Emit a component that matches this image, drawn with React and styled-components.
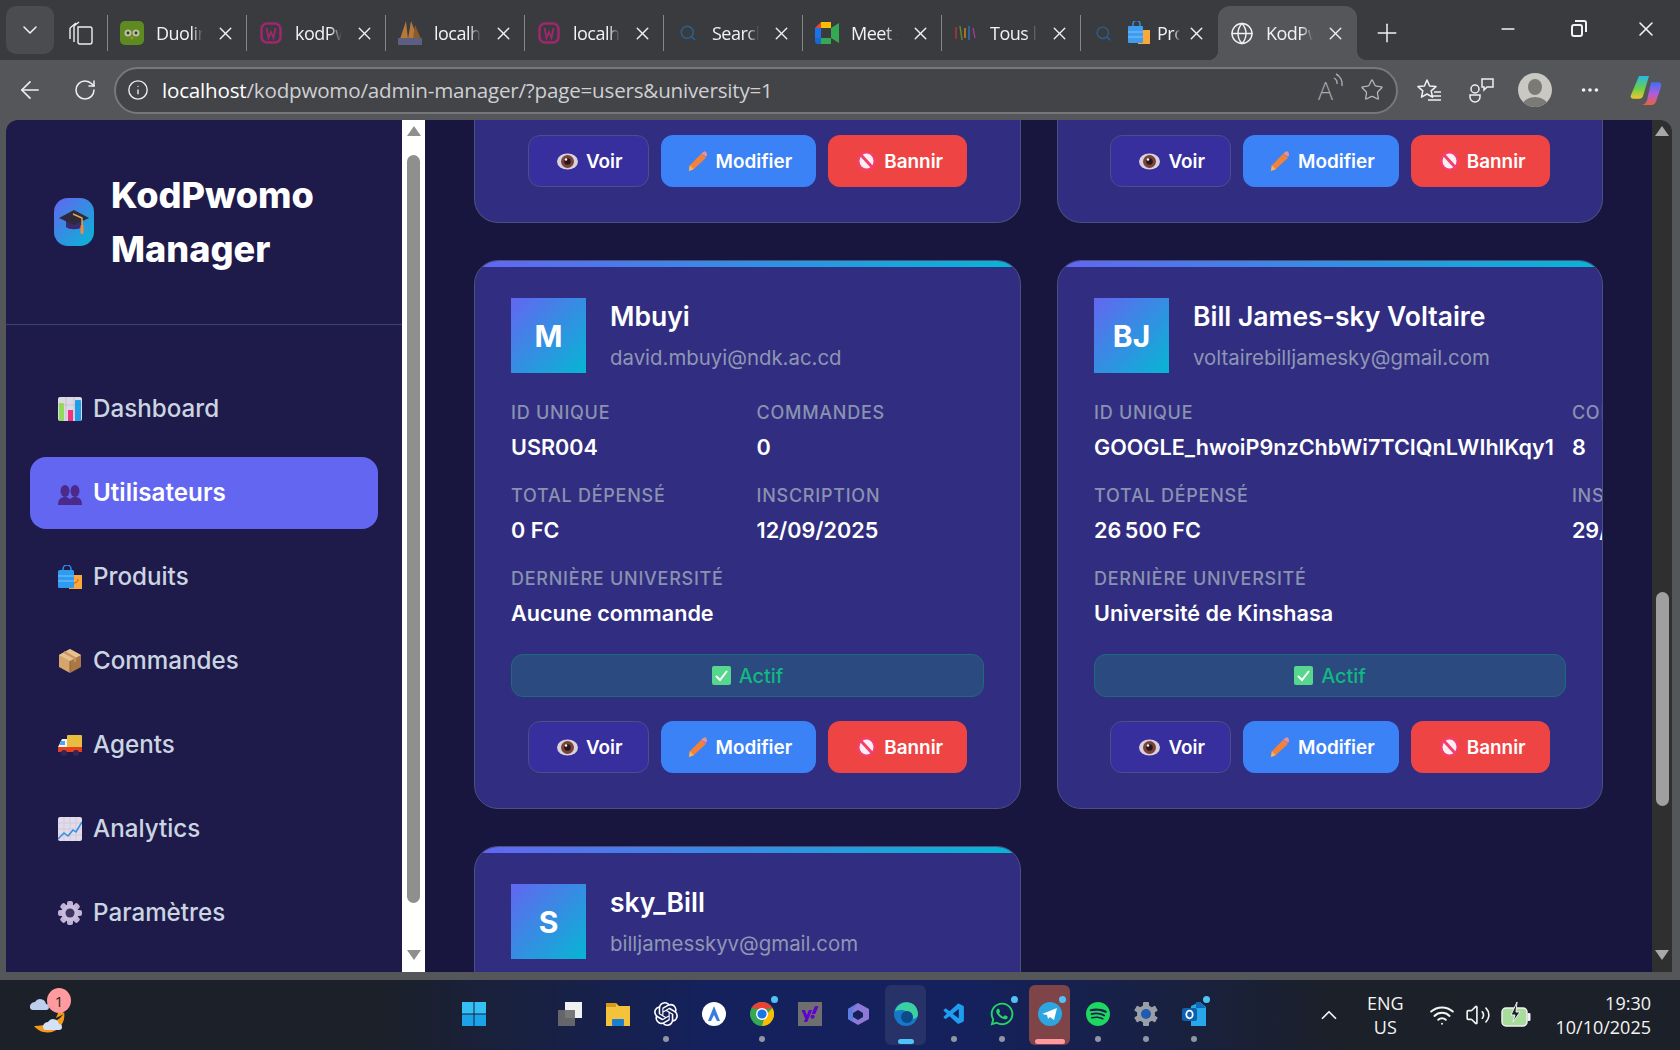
import styled, { createGlobalStyle, css } from 'styled-components'
import { ArrowLeft, RotateCw, Info, Star, Minus, X, Plus, ChevronDown, ChevronUp, Globe, Search, Wifi, Volume2, Ellipsis } from 'lucide-react'
import { SiOpenai, SiSpotify } from 'react-icons/si'
import { FaWhatsapp, FaYahoo } from 'react-icons/fa'
import { VscVscode } from 'react-icons/vsc'

const GlobalStyle = createGlobalStyle`
  html, body { margin: 0; padding: 0; background: #55565a; }
  * { box-sizing: border-box; }
`

const Screen = styled.div`
  width: 1680px;
  height: 1050px;
  display: flex;
  flex-direction: column;
  overflow: hidden;
  background: #55565a;
  font-family: Inter, "Liberation Sans", sans-serif;
`

/* ---- browser chrome ---- */
const TabStrip = styled.div`
  height: 60px;
  flex: none;
  display: flex;
  align-items: flex-end;
  padding-left: 6px;
  background: #3a3b3f;
  color: #f2f2f2;
  font-family: "Open Sans", "Liberation Sans", sans-serif;
`
const Collapse = styled.div`
  width: 48px;
  height: 48px;
  margin-bottom: 6px;
  display: flex;
  align-items: center;
  justify-content: center;
  background: #4b4c50;
  border-radius: 10px;
`
const Workspaces = styled.div`
  width: 54px;
  height: 54px;
  display: flex;
  align-items: center;
  justify-content: center;
  position: relative;
  &::after {
    content: '';
    position: absolute;
    right: 0;
    top: 9px;
    height: 36px;
    width: 1px;
    background: #85868a;
  }
`
const Tab = styled.div`
  width: ${p => p.$w || 139}px;
  height: 54px;
  display: flex;
  align-items: center;
  gap: ${p => p.$gap ?? 12}px;
  padding: 0 11px 0 12px;
  position: relative;
  ${p => p.$sep && css`
    &::after {
      content: '';
      position: absolute;
      right: 0;
      top: 9px;
      height: 36px;
      width: 1px;
      background: #85868a;
    }
  `}
  ${p => p.$active && css`
    background: #55565a;
    border-radius: 12px 12px 0 0;
    &::before, &::after {
      content: '';
      position: absolute;
      bottom: 0;
      width: 10px;
      height: 10px;
    }
    &::before {
      left: -10px;
      background: radial-gradient(circle at 0 0, transparent 10px, #55565a 10.5px);
    }
    &::after {
      right: -10px;
      background: radial-gradient(circle at 100% 0, transparent 10px, #55565a 10.5px);
    }
  `}
`
const TabIcon = styled.span`
  width: ${p => p.$w || 24}px;
  height: 24px;
  margin-left: ${p => p.$ml || 0}px;
  flex: none;
  display: flex;
  align-items: center;
  justify-content: center;
`
const TabTitle = styled.span`
  flex: 1;
  min-width: 0;
  font-size: 18px;
  letter-spacing: -0.5px;
  white-space: nowrap;
  overflow: hidden;
  -webkit-mask-image: linear-gradient(90deg, #000 75%, transparent 100%);
  mask-image: linear-gradient(90deg, #000 75%, transparent 100%);
`
const NewTab = styled.div`
  width: 60px;
  height: 54px;
  display: flex;
  align-items: center;
  justify-content: center;
`
const WindowControls = styled.div`
  margin-left: auto;
  display: flex;
  height: 60px;
`
const WindowBtn = styled.div`
  width: 69px;
  display: flex;
  align-items: center;
  justify-content: center;
  padding-bottom: 2px;
`
const RestoreIcon = styled.span`
  width: 12px;
  height: 13px;
  margin-top: 3px;
  border: 2px solid #f2f2f2;
  border-radius: 3px;
  position: relative;
  &::after {
    content: '';
    position: absolute;
    top: -6px;
    right: -6px;
    width: 10px;
    height: 10px;
    border-top: 2px solid #f2f2f2;
    border-right: 2px solid #f2f2f2;
    border-radius: 0 3px 0 0;
  }
`
const Toolbar = styled.div`
  height: 60px;
  flex: none;
  display: flex;
  align-items: center;
  background: #55565a;
  color: #f0f0f0;
`
const NavBtn = styled.div`
  width: ${p => p.$w || 48}px;
  height: 48px;
  margin-left: ${p => p.$ml || 0}px;
  flex: none;
  display: flex;
  align-items: center;
  justify-content: center;
`
const AddressBar = styled.div`
  width: 1284px;
  height: 47px;
  margin: 0 9px 0 4px;
  flex: none;
  display: flex;
  align-items: center;
  padding: 0 12px 0 11px;
  background: #434448;
  border: 2px solid #77787c;
  border-radius: 24px;
  font-family: "Open Sans", "Liberation Sans", sans-serif;
`
const Url = styled.div`
  margin-left: 13px;
  font-size: 20.6px;
  letter-spacing: -0.2px;
  color: #cfd0d3;
  white-space: nowrap;
  flex: 1;
  b { font-weight: 400; color: #fff; }
`
const ReadAloud = styled.span`
  width: 42px;
  display: flex;
  align-items: flex-start;
  font-size: 25px;
  font-weight: 300;
  color: #a9aaad;
`
const Avatar = styled.div`
  width: 34px;
  height: 34px;
  margin: 0 18px 0 6px;
  border-radius: 50%;
  flex: none;
  overflow: hidden;
`

/* ---- page ---- */
const Viewport = styled.div`
  height: 852px;
  flex: none;
  display: flex;
  margin: 0 8px 0 6px;
  border-radius: 12px 12px 0 0;
  overflow: hidden;
`
const Sidebar = styled.aside`
  width: 396px;
  flex: none;
  background: #1e1b4b;
`
const Brand = styled.div`
  height: 205px;
  display: flex;
  align-items: center;
  gap: 17px;
  padding: 0 0 0 48px;
  border-bottom: 1px solid #3b4668;
`
const BrandIcon = styled.div`
  width: 40px;
  height: 48px;
  border-radius: 14px;
  background: linear-gradient(135deg, #6366f1, #06b6d4);
  display: flex;
  align-items: center;
  justify-content: center;
`
const BrandName = styled.div`
  font-size: 36.1px;
  line-height: 54px;
  font-weight: 800;
  color: #fff;
`
const Nav = styled.nav`
  display: flex;
  flex-direction: column;
  gap: 12px;
  padding: 48px 24px 0;
`
const NavItem = styled.div`
  height: 72px;
  display: flex;
  align-items: center;
  gap: 11px;
  padding-left: 28px;
  padding-bottom: 1px;
  border-radius: 16px;
  font-size: 24.2px;
  font-weight: ${p => (p.$active ? 600 : 500)};
  color: ${p => (p.$active ? '#fff' : '#cbd5e1')};
  background: ${p => (p.$active ? '#6366f1' : 'transparent')};
`
const ScrollTrack = styled.div`
  width: ${p => p.$w}px;
  flex: none;
  background: ${p => p.$bg};
  display: flex;
  flex-direction: column;
  align-items: center;
  padding-top: 6px;
`
const ArrowGlyph = styled.div`
  width: 0;
  height: 0;
  border-left: 7px solid transparent;
  border-right: 7px solid transparent;
  border-bottom: ${p => (p.$down ? '0' : `10px solid ${p.$c}`)};
  border-top: ${p => (p.$down ? `10px solid ${p.$c}` : '0')};
  margin-top: ${p => p.$mt || 0}px;
`
const Thumb = styled.div`
  width: 13px;
  height: ${p => p.$h}px;
  margin-top: ${p => p.$mt}px;
  background: ${p => p.$c};
  border-radius: 7px;
`
const Main = styled.main`
  flex: 1;
  min-width: 0;
  overflow: hidden;
  background: #18163f;
  padding: 0 49px;
`
const CardGrid = styled.div`
  display: grid;
  grid-template-columns: 547px 546px;
  gap: 37px 36px;
  align-items: start;
`
const Card = styled.article`
  background: #312e81;
  border: 1px solid #4a5080;
  border-top: ${p => (p.$cut ? 'none' : '1px solid #4a5080')};
  border-radius: ${p => (p.$cut ? '0 0 24px 24px' : '24px')};
  padding: ${p => (p.$cut ? '15px 36px 35px' : '37px 36px 35px')};
  position: relative;
  overflow: hidden;
  &::before {
    content: '';
    display: ${p => (p.$cut ? 'none' : 'block')};
    position: absolute;
    top: 0;
    left: 0;
    right: 0;
    height: 6px;
    background: linear-gradient(90deg, #6366f1, #06b6d4);
  }
`
const CardHead = styled.header`
  display: flex;
  gap: 24px;
  margin-bottom: 27px;
`
const UserBadge = styled.div`
  width: 75px;
  height: 75px;
  flex: none;
  display: flex;
  align-items: center;
  justify-content: center;
  background: linear-gradient(135deg, #6366f1, #06b6d4);
  color: #fff;
  font-size: 30px;
  font-weight: 700;
`
const UserName = styled.div`
  font-size: 26.5px;
  line-height: 36px;
  font-weight: 600;
  color: #fff;
  margin-bottom: 8px;
`
const UserMail = styled.div`
  font-size: 20.4px;
  line-height: 32px;
  color: #8f96b3;
`
const Facts = styled.div`
  display: grid;
  grid-template-columns: 1fr 1fr;
  column-gap: 18px;
  row-gap: 22px;
`
const Fact = styled.div`
  grid-column: ${p => (p.$wide ? '1 / -1' : 'auto')};
`
const FactLabel = styled.div`
  font-size: 18px;
  line-height: 24px;
  font-weight: 500;
  letter-spacing: 0.75px;
  text-transform: uppercase;
  color: #8a92b0;
  margin-bottom: 7px;
`
const FactValue = styled.div`
  font-size: 21.6px;
  line-height: 30px;
  font-weight: 600;
  color: #fff;
  white-space: nowrap;
`
const Status = styled.div`
  height: 43px;
  margin-top: 26px;
  display: flex;
  align-items: center;
  justify-content: center;
  gap: 8px;
  background: #2b4a80;
  border: 1px solid #1f6a78;
  border-radius: 12px;
  color: #10b981;
  font-size: 19.8px;
  font-weight: 500;
`
const Actions = styled.div`
  display: flex;
  justify-content: center;
  gap: 12px;
  margin-top: ${p => (p.$cut ? 0 : 24)}px;
`
const actionKinds = {
  ghost: { bg: '#372f9e', pad: '0 25px 0 28px', border: '#4a4f85' },
  edit: { bg: '#3b82f6', pad: '0 23px 0 25px', border: 'transparent' },
  ban: { bg: '#ef4444', pad: '0 23px 0 28px', border: 'transparent' },
}
const ActionBtn = styled.button`
  height: 52px;
  padding: ${p => actionKinds[p.$kind].pad};
  display: flex;
  align-items: center;
  gap: 8px;
  border: 1px solid ${p => actionKinds[p.$kind].border};
  border-radius: 12px;
  color: #fff;
  font-family: inherit;
  font-size: 18.9px;
  font-weight: 600;
  background: ${p => actionKinds[p.$kind].bg};
`

/* ---- taskbar ---- */
const Taskbar = styled.footer`
  height: 70px;
  margin-top: 8px;
  flex: none;
  display: flex;
  align-items: center;
  color: #f4f4f4;
  background: linear-gradient(90deg, #1c2028 0%, #1c2028 22%, #14215c 42%, #14215c 58%, #1c2028 80%, #1c2028 100%);
  font-family: "Open Sans", "Liberation Sans", sans-serif;
`
const Weather = styled.div`
  width: 450px;
  flex: none;
  padding-left: 30px;
  position: relative;
  height: 60px;
  display: flex;
  align-items: center;
`
const WeatherBadge = styled.span`
  position: absolute;
  left: 47px;
  top: 3px;
  width: 24px;
  height: 25px;
  border-radius: 50%;
  background: #ff9a9e;
  color: #222;
  font-size: 15px;
  display: flex;
  align-items: center;
  justify-content: center;
`
const TaskApps = styled.div`
  display: flex;
  width: 772px;
  flex: none;
`
const TaskSlot = styled.div`
  width: 48px;
  height: 60px;
  flex: none;
  display: flex;
  align-items: center;
  justify-content: center;
  position: relative;
  border-radius: 6px;
  padding-bottom: 2px;
  &::before {
    content: '';
    display: ${p => (p.$tile ? 'block' : 'none')};
    position: absolute;
    top: 0;
    bottom: 0;
    left: 3px;
    right: 4px;
    border-radius: 6px;
    background: ${p => (p.$tile === 'alert' ? '#7e4448' : 'rgba(255,255,255,0.08)')};
  }
  & > svg { position: relative; }
`
const YahooTile = styled.span`
  width: 24px;
  height: 24px;
  display: flex;
  align-items: center;
  justify-content: center;
  background: #6f6f6f;
`
const RunDot = styled.span`
  position: absolute;
  bottom: 3px;
  left: 50%;
  width: 6px;
  height: 6px;
  margin-left: -3px;
  border-radius: 50%;
  background: #8f95a3;
`
const RunBar = styled.span`
  position: absolute;
  bottom: 1px;
  left: 50%;
  width: ${p => p.$w}px;
  height: 5px;
  margin-left: ${p => -p.$w / 2}px;
  border-radius: 3px;
  background: ${p => p.$c};
`
const NotifDot = styled.span`
  position: absolute;
  top: 11px;
  right: 8px;
  width: 7px;
  height: 7px;
  border-radius: 50%;
  background: #4fc3f7;
`
const Tray = styled.div`
  flex: 1;
  display: flex;
  align-items: center;
  padding-right: 29px;
`
const TrayText = styled.div`
  font-size: 18px;
  line-height: 24px;
  text-align: ${p => p.$align || 'center'};
  margin-left: ${p => (p.$push ? 'auto' : `${p.$ml || 0}px`)};
  white-space: nowrap;
`
const TrayIcon = styled.span`
  display: flex;
  margin-left: ${p => p.$ml}px;
`

/* ---- drawn emoji and logos ---- */
const ChartEmoji = () => (
  <svg width="24" height="24" viewBox="0 0 24 24">
    <rect width="24" height="24" rx="2" fill="#dcd8e4" />
    <path d="M8 0v24M16 0v24M0 8h24" stroke="#bdb8c9" strokeWidth=".6" />
    <rect x="1" y="6" width="5" height="18" rx="1" fill="#8fdc5a" />
    <rect x="10" y="13" width="5" height="11" fill="#f0337f" />
    <rect x="17" y="3" width="6" height="21" rx="1" fill="#1f9fe8" />
  </svg>
)
const UsersEmoji = () => (
  <svg width="24" height="24" viewBox="0 0 24 24" fill="#4b2a8c">
    <ellipse cx="7" cy="10" rx="4.5" ry="6" /><path d="M0 24c0-6 3-8 7-8s6 2 6 8z" />
    <ellipse cx="17" cy="10" rx="4.5" ry="6" /><path d="M11 24c0-6 2-8 6-8s7 2 7 8z" />
  </svg>
)
const BagEmoji = () => (
  <svg width="24" height="24" viewBox="0 0 24 24">
    <rect x="11" y="10" width="13" height="14" fill="#f9a93a" />
    <path d="M16 18c3 0 4-2 4-4" stroke="#e2452f" fill="none" />
    <path d="M5 6V4a4 4 0 0 1 8 0v2" stroke="#2f8fe8" strokeWidth="1.5" fill="none" />
    <rect y="5" width="16" height="18" rx="1.5" fill="#2f9bf0" />
    <path d="M0 11h16M0 16h16" stroke="#7cc4fa" />
  </svg>
)
const BoxEmoji = () => (
  <svg width="24" height="24" viewBox="0 0 24 24">
    <path d="M12 0 23 6v12l-11 6z" fill="#a97845" />
    <path d="M12 0 1 6v12l11 6z" fill="#d6a56c" />
    <path d="M1 6l11 6 11-6-11-6z" fill="#e6c08d" />
    <path d="M12 12v12" stroke="#8f6336" />
    <path d="M6 3l11 6v4" stroke="#c49560" strokeWidth="2" fill="none" />
  </svg>
)
const TruckEmoji = () => (
  <svg width="24" height="24" viewBox="0 0 24 24">
    <rect x="9" y="2" width="15" height="13" rx="1" fill="#e8bc3e" />
    <path d="M1 12l3-6h5v12H0v-4z" fill="#f4f4f4" />
    <path d="M3 8h4v4H1.5z" fill="#4aa8e8" />
    <rect y="14" width="24" height="5" fill="#e53f21" />
    <circle cx="6" cy="20" r="3" fill="#37254f" /><circle cx="18" cy="20" r="3" fill="#37254f" />
  </svg>
)
const TrendEmoji = () => (
  <svg width="24" height="24" viewBox="0 0 24 24">
    <rect width="24" height="24" rx="2" fill="#e2dcea" />
    <path d="M6 0v24M12 0v24M18 0v24M0 6h24M0 12h24M0 18h24" stroke="#c9c1d6" strokeWidth=".6" />
    <path d="M0 22l6-6 4 3 5-6 3 2 6-10" stroke="#2f8fe0" strokeWidth="1.5" fill="none" />
  </svg>
)
const GearEmoji = () => (
  <svg width="24" height="24" viewBox="0 0 24 24">
    <g fill="#c0b3d6">
      {[0, 45, 90, 135].map(a => (
        <rect key={a} x="9" y="0" width="6" height="24" rx="2" transform={`rotate(${a} 12 12)`} />
      ))}
    </g>
    <circle cx="12" cy="12" r="8.5" fill="#c9bddc" />
    <circle cx="12" cy="12" r="4.5" fill="#3e3560" />
  </svg>
)
const CapEmoji = () => (
  <svg width="30" height="26" viewBox="0 0 30 26">
    <path d="M7 10v8c3 3 13 3 16 0v-8z" fill="#3c2a6b" />
    <path d="M0 9 15 1l15 8-15 7z" fill="#2d2a3e" />
    <path d="M14 5l9 4v8" stroke="#f2a93b" strokeWidth="1.4" fill="none" />
    <rect x="21.5" y="16" width="3" height="9" rx="1" fill="#f28a3c" />
  </svg>
)
const EyeEmoji = () => (
  <svg width="21" height="19" viewBox="0 0 21 19">
    <ellipse cx="10.5" cy="9.5" rx="10.5" ry="8" fill="#d9d2dc" />
    <circle cx="10.5" cy="9.5" r="6.5" fill="#7a4238" />
    <circle cx="10.5" cy="9.5" r="3.2" fill="#26161e" />
    <circle cx="9" cy="7.5" r="1.2" fill="#fff" />
  </svg>
)
const PencilEmoji = () => (
  <svg width="21" height="21" viewBox="0 0 20 22">
    <path d="M1 21l1-6L14 3l5 4L6 19z" fill="#f4813a" />
    <path d="M14 3l2-2c1-1 2-1 3 0l1 2c0 1 0 2-1 3z" fill="#e8909a" />
    <path d="M1 21l1-6 4 4z" fill="#f2b45e" />
  </svg>
)
const BanEmoji = () => (
  <svg width="19" height="20" viewBox="0 0 19 20">
    <ellipse cx="9.5" cy="10" rx="9.5" ry="10" fill="#f43f6e" />
    <ellipse cx="9.5" cy="10" rx="7" ry="7.6" fill="#fdeef2" />
    <path d="M4 4l11 12" stroke="#f43f6e" strokeWidth="3" />
  </svg>
)
const CheckEmoji = () => (
  <svg width="19" height="19" viewBox="0 0 19 19">
    <rect width="19" height="19" rx="2" fill="#57d68d" />
    <path d="M4 10l4 4 7-9" stroke="#fff" strokeWidth="2" fill="none" />
  </svg>
)

const OwlIcon = () => (
  <svg width="24" height="24" viewBox="0 0 24 24">
    <rect width="24" height="24" rx="5" fill="#5f8a22" />
    <circle cx="8" cy="12" r="3.5" fill="#b9bf9f" /><circle cx="16" cy="12" r="3.5" fill="#b9bf9f" />
    <circle cx="8" cy="12" r="1.4" fill="#333" /><circle cx="16" cy="12" r="1.4" fill="#333" />
    <path d="M10.5 16h3L12 19z" fill="#c48d20" />
  </svg>
)
const WampIcon = () => (
  <svg width="24" height="24" viewBox="0 0 24 24" fill="none" stroke="#a0266f" strokeWidth="2.6">
    <path d="M8 2.5h8a5.5 5.5 0 0 1 5.5 5.5v8a5.5 5.5 0 0 1-5.5 5.5H8A5.5 5.5 0 0 1 2.5 16V8A5.5 5.5 0 0 1 8 2.5z" />
    <path d="M7.5 7l2 10 2.5-6 2.5 6 2-10" strokeWidth="1.8" />
  </svg>
)
const PmaIcon = () => (
  <svg width="24" height="24" viewBox="0 0 24 24">
    <path d="M8 0 2 18h8zM13 0 10 18h10z" fill="#b5783a" />
    <path d="M17 4l-2 14h8z" fill="#8c5a2a" />
    <rect y="17" width="24" height="7" fill="#5c5f82" />
  </svg>
)
const MeetIcon = () => (
  <svg width="24" height="24" viewBox="0 0 24 24">
    <path d="M6 1h10v7H6z" fill="#fbbc04" /><path d="M0 7h6v10H0z" fill="#1a73e8" />
    <path d="M0 7l6-6v6z" fill="#ea4335" /><path d="M0 17h6v6H3a3 3 0 0 1-3-3z" fill="#1967d2" />
    <path d="M6 17h10v6H6z" fill="#34a853" /><path d="M16 7l8-5v20l-8-5z" fill="#34a853" />
    <rect x="6" y="7" width="10" height="10" fill="#3a3b3f" />
  </svg>
)
const TousIcon = () => (
  <svg width="24" height="24" viewBox="0 0 24 24" strokeWidth="1.4" fill="none">
    <path d="M2 6v12" stroke="#b3372f" /><path d="M6 5l2 14" stroke="#6a8a2a" /><path d="M11 7v10" stroke="#d08a20" />
    <path d="M15 5v14" stroke="#2f74b8" /><path d="M19 7l2 10" stroke="#a03a8a" />
  </svg>
)
const ShopIcon = () => (
  <svg width="24" height="24" viewBox="0 0 24 24">
    <rect x="11" y="9" width="12" height="14" fill="#f9a93a" />
    <path d="M6 5V3a3.5 3.5 0 0 1 7 0v2" stroke="#2f8fe8" strokeWidth="1.5" fill="none" />
    <rect x="1" y="5" width="15" height="17" rx="1" fill="#3f9cf0" />
    <path d="M1 11h15M1 16h15" stroke="#7cc4fa" />
  </svg>
)
const CopilotLogo = () => (
  <svg width="32" height="31" viewBox="0 0 32 34" preserveAspectRatio="none">
    <defs>
      <linearGradient id="cop1" x1="0" y1="0" x2="0" y2="1"><stop offset="0" stopColor="#27b7e8" /><stop offset=".55" stopColor="#6ad04a" /><stop offset="1" stopColor="#f3c52b" /></linearGradient>
      <linearGradient id="cop2" x1="0" y1="0" x2="0" y2="1"><stop offset="0" stopColor="#3d6ff0" /><stop offset=".5" stopColor="#b05be0" /><stop offset="1" stopColor="#f0603a" /></linearGradient>
    </defs>
    <path d="M9 1h10l-6 22c-1 3-3 3-5 3H3c-2 0-3-2-2-4z" fill="url(#cop1)" />
    <path d="M21 8h7c3 0 4 2 3 5l-5 16c-1 3-3 4-5 4H11c3 0 5-2 6-5z" fill="url(#cop2)" />
  </svg>
)
const ProfilePic = () => (
  <svg width="34" height="34" viewBox="0 0 34 34">
    <rect width="34" height="34" fill="#c9c8c3" />
    <ellipse cx="17" cy="14" rx="7" ry="8" fill="#7a7a76" />
    <ellipse cx="17" cy="33" rx="13" ry="9" fill="#7a7a76" />
  </svg>
)
const FavIcon = () => (
  <svg width="25" height="25" viewBox="0 0 25 25" fill="none" stroke="#f0f0f0" strokeWidth="1.5">
    <path d="M10 2l2.6 6 6.4.6-4.8 4.3 1.3 6.3-5.5-3.2L4.5 19.2l1.3-6.3L1 8.6 7.4 8z" strokeLinejoin="round" />
    <path d="M17 14h7M16 18h8M11 22h13" />
  </svg>
)
const SoundWaves = () => (
  <svg width="12" height="18" viewBox="0 0 12 18" fill="none" stroke="#a9aaad" strokeWidth="1.4">
    <path d="M1 5a6 6 0 0 1 3 6M3 1a11 11 0 0 1 6 12" />
  </svg>
)

const WeatherIcon = () => (
  <svg width="37" height="42" viewBox="0 0 37 42">
    <path d="M4 32a17 17 0 0 0 30-14c-2 8-16 14-30 14z" fill="#f49a1c" />
    <path d="M30 14a17 17 0 0 1 4 6l-8 4z" fill="#f49a1c" />
    <path d="M0 14a5 5 0 0 1 5-6 6 6 0 0 1 11 2 3 3 0 0 1 0 6H3a3 3 0 0 1-3-2z" fill="#bcd0ee" />
    <path d="M13 34a5 5 0 0 1 5-6 6 6 0 0 1 11 2 3 3 0 0 1 0 6H16a3 3 0 0 1-3-2z" fill="#d5e1f5" />
  </svg>
)
const WinLogo = () => (
  <svg width="24" height="24" viewBox="0 0 24 24">
    <g fill="#35c0f5">
      <rect width="11.5" height="11.5" /><rect x="12.5" width="11.5" height="11.5" />
    </g>
    <g fill="#1aa3e8">
      <rect y="12.5" width="11.5" height="11.5" /><rect x="12.5" y="12.5" width="11.5" height="11.5" />
    </g>
  </svg>
)
const TaskViewIcon = () => (
  <svg width="24" height="24" viewBox="0 0 24 24">
    <rect x="7" y="0" width="17" height="16" fill="#f1f1f1" />
    <rect y="8" width="17" height="16" fill="#6d6d6d" opacity=".92" />
  </svg>
)
const FolderIcon = () => (
  <svg width="24" height="24" viewBox="0 0 24 24">
    <path d="M0 1h10l3 3h11v20H0z" fill="#f5c33b" />
    <rect y="1" width="10" height="4" fill="#d69a1e" />
    <rect x="6" y="17" width="12" height="7" rx="1" fill="#1b7fd0" />
  </svg>
)
const DevIcon = () => (
  <svg width="24" height="24" viewBox="0 0 24 24">
    <circle cx="12" cy="12" r="12" fill="#fff" />
    <path d="M12 4 6 19h3l3-6 3 6h3z" fill="#3a7be0" />
  </svg>
)
const ChromeIcon = () => (
  <svg width="24" height="24" viewBox="0 0 24 24">
    <circle cx="12" cy="12" r="12" fill="#34a853" />
    <path d="M1.6 6A12 12 0 0 1 22.4 6L12 8z" fill="#ea4335" />
    <path d="M22.4 6A12 12 0 0 1 12 24l3-10z" fill="#fbbc04" />
    <circle cx="12" cy="12" r="6" fill="#fff" />
    <circle cx="12" cy="12" r="4.6" fill="#1a73e8" />
  </svg>
)
const CopilotTask = () => (
  <svg width="23" height="24" viewBox="0 0 23 24">
    <path d="M11 1 22 7v10l-11 6L1 17V7z" fill="#8e7ad6" />
    <path d="M11 1 1 7v10l5 3V8z" fill="#5f7de0" />
    <path d="M11 8l5 3v4l-5 3-5-3v-4z" fill="#14215c" />
  </svg>
)
const EdgeIcon = () => (
  <svg width="24" height="24" viewBox="0 0 24 24">
    <circle cx="12" cy="12" r="12" fill="#1578c8" />
    <path d="M1 9C5-3 23-3 24 12c0 5-6 6-9 3 1-5-5-9-14-6z" fill="#3cd0a0" />
    <circle cx="13" cy="15" r="6" fill="#0c4a8c" />
  </svg>
)
const TelegramIcon = () => (
  <svg width="24" height="24" viewBox="0 0 24 24">
    <circle cx="12" cy="12" r="12" fill="#2ca5e0" />
    <path d="M4 12 19 6l-3 12-4-3-2 2-1-4z" fill="#fff" />
  </svg>
)
const SettingsIcon = () => (
  <svg width="24" height="24" viewBox="0 0 24 24">
    <g fill="#9a9ea6">
      {[0, 60, 120].map(a => (
        <rect key={a} x="9" y="0" width="6" height="24" rx="1" transform={`rotate(${a} 12 12)`} />
      ))}
    </g>
    <circle cx="12" cy="12" r="9" fill="#9a9ea6" />
    <circle cx="12" cy="12" r="5" fill="#1f5cb0" />
  </svg>
)
const OutlookIcon = () => (
  <svg width="24" height="24" viewBox="0 0 24 24">
    <path d="M9 4l9-4 6 5v19H9z" fill="#28a8ea" />
    <path d="M14 0h4l6 6H14z" fill="#0f6cbd" />
    <rect y="6" width="15" height="13" rx="2" fill="#0f5fb0" />
    <ellipse cx="7.5" cy="12.5" rx="3.2" ry="3.8" fill="none" stroke="#fff" strokeWidth="1.8" />
  </svg>
)
const BatteryIcon = () => (
  <svg width="30" height="26" viewBox="0 0 30 26">
    <rect x="1" y="6" width="25" height="18" rx="4" fill="#a8dc9a" stroke="#f0f0f0" strokeWidth="1.5" />
    <rect x="26.5" y="11" width="3" height="8" rx="1" fill="#f0f0f0" />
    <path d="M16 0 10 13h4l-2 7 7-10h-4z" fill="#1c2028" stroke="#f0f0f0" strokeWidth="1" />
  </svg>
)

const tabs = [
  { icon: <OwlIcon />, title: 'Duolingo' },
  { icon: <WampIcon />, title: 'kodPwomo' },
  { icon: <PmaIcon />, title: 'localhost' },
  { icon: <WampIcon />, title: 'localhost' },
  { icon: <Search size={18} color="#2a5f8f" />, title: 'Search' },
  { icon: <MeetIcon />, title: 'Meet - Google' },
  { icon: <TousIcon />, title: 'Tous les' },
]

const navItems = [
  { icon: <ChartEmoji />, label: 'Dashboard' },
  { icon: <UsersEmoji />, label: 'Utilisateurs', active: true },
  { icon: <BagEmoji />, label: 'Produits' },
  { icon: <BoxEmoji />, label: 'Commandes' },
  { icon: <TruckEmoji />, label: 'Agents' },
  { icon: <TrendEmoji />, label: 'Analytics' },
  { icon: <GearEmoji />, label: 'Paramètres' },
]

const users = [
  {
    initials: 'M', name: 'Mbuyi', mail: 'david.mbuyi@ndk.ac.cd', id: 'USR004', orders: '0',
    spent: '0 FC', joined: '12/09/2025', uni: 'Aucune commande',
  },
  {
    initials: 'BJ', name: 'Bill James-sky Voltaire', mail: 'voltairebilljamesky@gmail.com',
    id: 'GOOGLE_hwoiP9nzChbWi7TCIQnLWIhlKqy1', orders: '8',
    spent: '26\u202F500 FC', joined: '29/09/2025', uni: 'Université de Kinshasa',
  },
  {
    initials: 'S', name: 'sky_Bill', mail: 'billjamesskyv@gmail.com', id: 'USR006', orders: '0',
    spent: '0 FC', joined: '02/10/2025', uni: 'Aucune commande',
  },
]

const taskApps = [
  { icon: <WinLogo /> },
  { empty: true },
  { icon: <TaskViewIcon /> },
  { icon: <FolderIcon /> },
  { icon: <SiOpenai size={24} color="#fff" />, run: true },
  { icon: <DevIcon /> },
  { icon: <ChromeIcon />, run: true, notif: true },
  { icon: <YahooTile><FaYahoo size={18} color="#5f01d1" /></YahooTile> },
  { icon: <CopilotTask /> },
  { icon: <EdgeIcon />, tile: 'focus', bar: '#4fc3f7', barW: 16 },
  { icon: <VscVscode size={25} color="#1f9cf0" />, run: true },
  { icon: <FaWhatsapp size={26} color="#25d366" />, run: true, notif: true },
  { icon: <TelegramIcon />, tile: 'alert', bar: '#ff9a9e', barW: 30, notif: true },
  { icon: <SiSpotify size={24} color="#1ed760" />, run: true },
  { icon: <SettingsIcon />, run: true },
  { icon: <OutlookIcon />, run: true, notif: true },
]

const ActionRow = ({ cut }) => (
  <Actions $cut={cut}>
    <ActionBtn $kind="ghost"><EyeEmoji />Voir</ActionBtn>
    <ActionBtn $kind="edit"><PencilEmoji />Modifier</ActionBtn>
    <ActionBtn $kind="ban"><BanEmoji />Bannir</ActionBtn>
  </Actions>
)

const UserCard = ({ user }) => (
  <Card>
    <CardHead>
      <UserBadge>{user.initials}</UserBadge>
      <div>
        <UserName>{user.name}</UserName>
        <UserMail>{user.mail}</UserMail>
      </div>
    </CardHead>
    <Facts>
      <Fact><FactLabel>ID unique</FactLabel><FactValue>{user.id}</FactValue></Fact>
      <Fact><FactLabel>Commandes</FactLabel><FactValue>{user.orders}</FactValue></Fact>
      <Fact><FactLabel>Total dépensé</FactLabel><FactValue>{user.spent}</FactValue></Fact>
      <Fact><FactLabel>Inscription</FactLabel><FactValue>{user.joined}</FactValue></Fact>
      <Fact $wide><FactLabel>Dernière université</FactLabel><FactValue>{user.uni}</FactValue></Fact>
    </Facts>
    <Status><CheckEmoji />Actif</Status>
    <ActionRow />
  </Card>
)

const App = () => {
  return (
    <Screen>
      <GlobalStyle />
      <TabStrip>
        <Collapse><ChevronDown size={24} strokeWidth={1.5} /></Collapse>
        <Workspaces>
          <svg width="26" height="26" viewBox="0 0 26 26" fill="none" stroke="#eee" strokeWidth="1.4">
            <path d="M2 8l6-5M6 6l5-4M10 7h12a2 2 0 0 1 2 2v13a2 2 0 0 1-2 2H12a2 2 0 0 1-2-2z" />
            <path d="M6 6v16M2 8v11" />
          </svg>
        </Workspaces>
        {tabs.map((tab, i) => (
          <Tab key={i} $sep>
            <TabIcon>{tab.icon}</TabIcon>
            <TabTitle>{tab.title}</TabTitle>
            <X size={21} strokeWidth={1.6} />
          </Tab>
        ))}
        <Tab $w={137} $gap={6}>
          <TabIcon $w={20}><Search size={17} color="#2a5f8f" /></TabIcon>
          <TabIcon $ml={8}><ShopIcon /></TabIcon>
          <TabTitle>Produits</TabTitle>
          <X size={21} strokeWidth={1.6} />
        </Tab>
        <Tab $active>
          <TabIcon><Globe size={25} strokeWidth={1.4} /></TabIcon>
          <TabTitle>KodPwomo</TabTitle>
          <X size={21} strokeWidth={1.6} />
        </Tab>
        <NewTab><Plus size={30} strokeWidth={1.2} /></NewTab>
        <WindowControls>
          <WindowBtn><Minus size={20} strokeWidth={2} /></WindowBtn>
          <WindowBtn><RestoreIcon /></WindowBtn>
          <WindowBtn><X size={24} strokeWidth={1.6} /></WindowBtn>
        </WindowControls>
      </TabStrip>

      <Toolbar>
        <NavBtn $w={60}><ArrowLeft size={28} strokeWidth={1.4} /></NavBtn>
        <NavBtn $w={50}><RotateCw size={24} strokeWidth={1.5} /></NavBtn>
        <AddressBar>
          <Info size={22} strokeWidth={1.5} />
          <Url><b>localhost</b>/kodpwomo/admin-manager/?page=users&amp;university=1</Url>
          <ReadAloud>A<SoundWaves /></ReadAloud>
          <Star size={24} strokeWidth={1.3} color="#b5b6b9" />
        </AddressBar>
        <NavBtn $w={44}><FavIcon /></NavBtn>
        <NavBtn $w={61}>
          <svg width="26" height="26" viewBox="0 0 26 26" fill="none" stroke="#f0f0f0" strokeWidth="1.5">
            <circle cx="6" cy="12" r="4" /><path d="M1 18h10v2a5 5 0 0 1-10 0zM13 2h11v8H18l-3 3v-3h-2z" />
          </svg>
        </NavBtn>
        <Avatar><ProfilePic /></Avatar>
        <NavBtn $w={40}><Ellipsis size={22} /></NavBtn>
        <NavBtn $w={40} $ml={16}><CopilotLogo /></NavBtn>
      </Toolbar>

      <Viewport>
        <Sidebar>
          <Brand>
            <BrandIcon><CapEmoji /></BrandIcon>
            <BrandName>KodPwomo<br />Manager</BrandName>
          </Brand>
          <Nav>
            {navItems.map(item => (
              <NavItem key={item.label} $active={item.active}>
                {item.icon}
                {item.label}
              </NavItem>
            ))}
          </Nav>
        </Sidebar>
        <ScrollTrack $w={23} $bg="#fff">
          <ArrowGlyph $c="#8f8f8f" />
          <Thumb $c="#8f8f8f" $mt={19} $h={748} />
          <ArrowGlyph $c="#8f8f8f" $down $mt={47} />
        </ScrollTrack>
        <Main>
          <CardGrid>
            <Card $cut><ActionRow cut /></Card>
            <Card $cut><ActionRow cut /></Card>
            {users.map(user => <UserCard key={user.initials} user={user} />)}
          </CardGrid>
        </Main>
        <ScrollTrack $w={20} $bg="#2f2f2f">
          <ArrowGlyph $c="#a8a8a8" />
          <Thumb $c="#9f9f9f" $mt={456} $h={214} />
          <ArrowGlyph $c="#a8a8a8" $down $mt={144} />
        </ScrollTrack>
      </Viewport>

      <Taskbar>
        <Weather>
          <WeatherIcon />
          <WeatherBadge>1</WeatherBadge>
        </Weather>
        <TaskApps>
          {taskApps.map((app, i) => (
            <TaskSlot key={i} $tile={app.tile}>
              {app.icon}
              {app.run && <RunDot />}
              {app.bar && <RunBar $w={app.barW} $c={app.bar} />}
              {app.notif && <NotifDot />}
            </TaskSlot>
          ))}
        </TaskApps>
        <Tray>
          <TrayIcon $ml={94}><ChevronUp size={26} strokeWidth={1.6} /></TrayIcon>
          <TrayText $ml={25}>ENG<br />US</TrayText>
          <TrayIcon $ml={25}><Wifi size={26} strokeWidth={1.8} /></TrayIcon>
          <TrayIcon $ml={10}><Volume2 size={26} strokeWidth={1.5} /></TrayIcon>
          <TrayIcon $ml={10}><BatteryIcon /></TrayIcon>
          <TrayText $align="right" $push>19:30<br />10/10/2025</TrayText>
        </Tray>
      </Taskbar>
    </Screen>
  )
}

export default App
